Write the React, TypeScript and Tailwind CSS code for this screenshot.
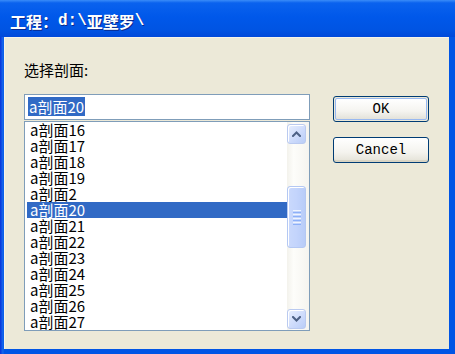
import React from "react";

const CJK = '"Noto Sans CJK SC", "Noto Sans", sans-serif';
const MONO = '"Liberation Mono", "Noto Sans CJK SC", monospace';

const items = ["16", "17", "18", "19", "2", "20", "21", "22", "23", "24", "25", "26", "27"];

function Chevron({ down }: { down?: boolean }) {
  return (
    <svg width="9" height="6" viewBox="0 0 9 6">
      <path
        d={down ? "M1 1 L4.5 4.5 L8 1" : "M1 5 L4.5 1.5 L8 5"}
        fill="none"
        stroke="#4D6185"
        strokeWidth="2"
        strokeLinecap="square"
      />
    </svg>
  );
}

function ScrollBtn({ down }: { down?: boolean }) {
  return (
    <div className="w-[19px] h-[20px] rounded-[3px] border border-[#BACAF0] bg-[linear-gradient(135deg,#E8EFFE_0%,#CCDAFB_60%,#B9CDF7_100%)] flex items-center justify-center shadow-[inset_1px_1px_0_#ffffff]">
      <Chevron down={down} />
    </div>
  );
}

export default function App() {
  return (
    <div className="w-[455px] h-[354px] flex flex-col bg-[linear-gradient(180deg,#0A5DE8_0%,#0055E5_60%,#003DD0_100%)] overflow-hidden">
      <div
        className="h-[37px] shrink-0 flex items-start pl-[10px] pt-[9px] text-white font-bold text-[16px] leading-[24px] bg-[linear-gradient(180deg,#3A8CF8_0%,#0A62EE_8%,#0058EA_45%,#0054E3_80%,#0049DA_100%)] [text-shadow:1px_1px_0_#0A2A8F]"
        style={{ fontFamily: CJK }}
      >
        <span>工程：</span>
        <span style={{ fontFamily: MONO }}>{" d:\\"}</span>
        <span>亚壁罗</span>
        <span style={{ fontFamily: MONO }}>{"\\"}</span>
      </div>
      <div className="flex-1 flex pl-[4px] pr-[6px] pb-[5px] bg-[linear-gradient(90deg,#0831D9_0px,#166AEE_3px,#0055E5_4px)]">
        <div className="flex-1 bg-[#ECE9D8] flex pl-[19px] pt-[22px] border-l border-t border-[#F5F3EA]">
          <div className="w-[286px] flex flex-col" style={{ fontFamily: CJK }}>
            <div className="text-[15px] leading-[20px] text-black h-[20px]">选择剖面:</div>
            <div className="mt-[14px] h-[26px] border border-[#7F9DB9] bg-white flex items-start pt-[2px] pl-[3px]">
              <span className="bg-[#316AC5] text-white text-[15px] leading-[19px] h-[19px] px-[1px]">a剖面20</span>
            </div>
            <div className="mt-[1px] h-[210px] border border-[#7F9DB9] bg-white flex">
              <div className="flex-1 flex flex-col pl-[2px]">
                {items.map((n) => {
                  const sel = n === "20";
                  return (
                    <div
                      key={n}
                      className={
                        sel
                          ? "h-[16px] leading-[16px] text-[15px] pl-[3px] bg-[#316AC5] text-white"
                          : "h-[16px] leading-[16px] text-[15px] pl-[3px] text-black"
                      }
                    >
                      a剖面{n}
                    </div>
                  );
                })}
              </div>
              <div className="w-[22px] flex flex-col items-start pt-[2px] pb-[1px] bg-[linear-gradient(90deg,#F3F2EC_0%,#FDFDFA_30%,#F5F4EF_100%)]">
                <ScrollBtn />
                <div className="flex-1 w-[19px] flex flex-col">
                  <div className="h-[42px]" />
                  <div className="h-[62px] w-[19px] rounded-[3px] border border-[#B4C8F3] bg-[linear-gradient(90deg,#CAD9FC_0%,#C3D4FC_50%,#B8CCF8_100%)] shadow-[inset_1px_1px_0_#ffffff] flex flex-col items-center justify-center gap-[1px]">
                    <div className="w-[8px] h-[1px] bg-[#EEF4FE]" />
                    <div className="w-[8px] h-[1px] bg-[#8CB0F8]" />
                    <div className="w-[8px] h-[1px] bg-[#EEF4FE]" />
                    <div className="w-[8px] h-[1px] bg-[#8CB0F8]" />
                    <div className="w-[8px] h-[1px] bg-[#EEF4FE]" />
                    <div className="w-[8px] h-[1px] bg-[#8CB0F8]" />
                    <div className="w-[8px] h-[1px] bg-[#EEF4FE]" />
                    <div className="w-[8px] h-[1px] bg-[#8CB0F8]" />
                  </div>
                </div>
                <ScrollBtn down />
              </div>
            </div>
          </div>
          <div className="ml-[23px] pt-[36px] flex flex-col gap-[15px]" style={{ fontFamily: MONO }}>
            <div className="w-[96px] h-[26px] rounded-[3px] border border-[#003C74] p-[1px] bg-[#ECE9D8]">
              <div className="w-full h-full rounded-[2px] border border-[#98B8F0] bg-[linear-gradient(180deg,#FFFFFF_0%,#F5F4F0_60%,#E3E2DA_100%)] flex items-center justify-center text-[14px] text-black">
                OK
              </div>
            </div>
            <div className="w-[96px] h-[26px] rounded-[3px] border border-[#003C74] bg-[linear-gradient(180deg,#FFFFFF_0%,#F4F3EE_60%,#E3E1D6_100%)] shadow-[inset_0_-2px_0_#D8D4C4] flex items-center justify-center text-[14px] text-black">
              Cancel
            </div>
          </div>
        </div>
      </div>
    </div>
  );
}
